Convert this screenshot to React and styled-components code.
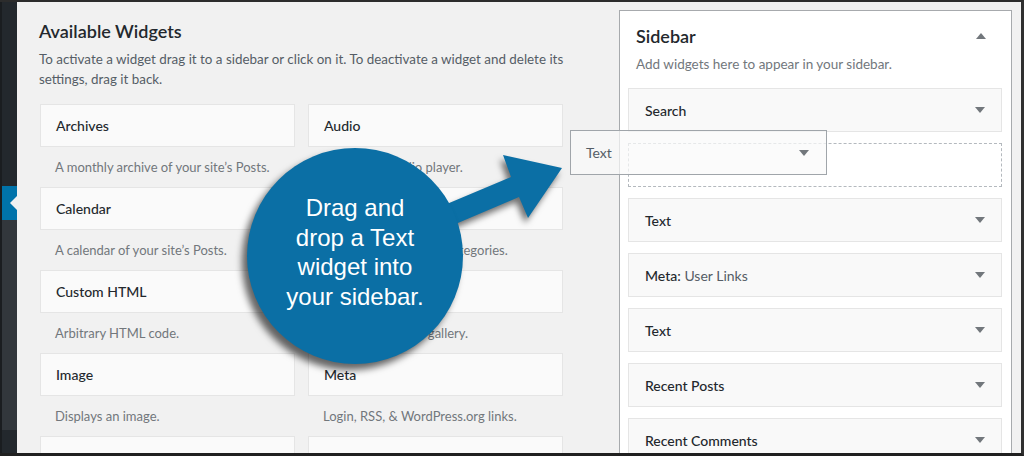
import React from "react";
import styled, { createGlobalStyle } from "styled-components";

const GlobalStyle = createGlobalStyle`
  html, body {
    margin: 0;
    padding: 0;
    overflow: hidden;
    background: #f1f1f1;
  }
  * { box-sizing: border-box; }
`;

const Frame = styled.div`
  width: 1024px;
  height: 456px;
  overflow: hidden;
  border-top: 2px solid #2c2c2c;
  border-right: 3px solid #2f2f2f;
  border-bottom: 3px solid #202020;
  background: #f1f1f1;
  font-family: Lato, "Noto Sans", sans-serif;
  color: #23282d;
`;

const Canvas = styled.div`
  position: relative;
  display: flex;
  height: 100%;
`;

// admin menu strip on the far left
const AdminMenu = styled.div`
  width: 17px;
  flex: none;
  display: flex;
  flex-direction: column;
  border-left: 2px solid #1a1d20;
  background: #23282d;
`;

const MenuPart = styled.div`
  height: ${(p) => p.h}px;
  flex: none;
  background: ${(p) => p.bg};
  position: relative;
`;

const CurrentMark = styled.div`
  position: absolute;
  right: 0;
  top: 10px;
  width: 0;
  height: 0;
  border-top: 7px solid transparent;
  border-bottom: 7px solid transparent;
  border-right: 7px solid #f1f1f1;
`;

const Main = styled.div`
  flex: 1;
  display: flex;
  padding-right: 9px;
`;

const Available = styled.section`
  width: 602px;
  flex: none;
  padding: 17px 0 0 22px;
`;

const Heading = styled.h2`
  margin: 0;
  font-size: 18px;
  line-height: 24px;
  font-weight: 600;
  color: #23282d;
`;

const Intro = styled.p`
  margin: 6px 0 0;
  width: 528px;
  font-size: 13.4px;
  line-height: 20px;
  color: #555d66;
`;

const WidgetGrid = styled.div`
  display: grid;
  grid-template-columns: 255px 255px;
  column-gap: 13px;
  margin: 15px 0 0 1px;
`;

const Widget = styled.div`
  height: 83px;
`;

const Card = styled.div`
  height: 43px;
  display: flex;
  align-items: center;
  padding: 0 15px;
  background: #fafafa;
  border: 1px solid #e5e5e5;
  font-size: 14px;
  font-weight: 500;
  color: #23282d;
`;

const WidgetDesc = styled.div`
  padding: 11px 0 0 15px;
  font-size: 13px;
  line-height: 18px;
  color: #72777c;
`;

const SidebarPanel = styled.section`
  flex: 1;
  margin-top: 8px;
  background: #fff;
  border: 1px solid #a7aaad;
  border-bottom: none;
  padding: 13px 9px 0 8px;
`;

const PanelHead = styled.div`
  display: flex;
  align-items: center;
  justify-content: space-between;
  padding: 0 16px 0 8px;
`;

const PanelTitle = styled.h3`
  margin: 0;
  font-size: 18px;
  line-height: 24px;
  font-weight: 600;
  color: #23282d;
`;

const Caret = styled.span`
  width: 0;
  height: 0;
  border-left: 5px solid transparent;
  border-right: 5px solid transparent;
  ${(p) =>
    p.up
      ? "border-bottom: 6px solid #72777c;"
      : "border-top: 6px solid #72777c;"}
`;

const PanelDesc = styled.p`
  margin: 7px 0 15px 8px;
  font-size: 13.5px;
  line-height: 18px;
  color: #72777c;
`;

const ItemList = styled.div`
  display: flex;
  flex-direction: column;
  gap: 11px;
`;

const Item = styled.div`
  height: 44px;
  flex: none;
  display: flex;
  align-items: center;
  justify-content: space-between;
  padding: 0 16px;
  background: ${(p) => (p.placeholder ? "transparent" : "#f9f9f9")};
  border: 1px ${(p) => (p.placeholder ? "dashed #b4b9be" : "solid #e5e5e5")};
  font-size: 14px;
  font-weight: 500;
  color: #23282d;
`;

const Subtitle = styled.span`
  font-weight: 400;
  color: #555d66;
`;

const Dragged = styled.div`
  position: absolute;
  left: 570px;
  top: 128px;
  width: 257px;
  height: 45px;
  display: flex;
  align-items: center;
  justify-content: space-between;
  padding: 0 17px 0 15px;
  background: rgba(250, 250, 250, 0.72);
  border: 1px solid #a0a5aa;
  font-size: 14px;
  color: #555d66;
`;

const Arrow = styled.svg`
  position: absolute;
  left: 0;
  top: 0;
  filter: drop-shadow(-3px 5px 3px rgba(0, 0, 0, 0.55));
`;

const Callout = styled.div`
  position: absolute;
  left: 247px;
  top: 146px;
  width: 216px;
  height: 216px;
  border-radius: 50%;
  background: #0b6fa5;
  box-shadow: -5px 6px 7px rgba(0, 0, 0, 0.6);
  display: flex;
  align-items: center;
  justify-content: center;
  padding-bottom: 8px;
  text-align: center;
  font-family: "Liberation Sans", Arial, sans-serif;
  font-size: 24px;
  line-height: 29.5px;
  color: #fff;
`;

const available = [
  ["Archives", "A monthly archive of your site’s Posts."],
  ["Audio", "Displays an audio player."],
  ["Calendar", "A calendar of your site’s Posts."],
  ["Categories", "A list or dropdown of categories."],
  ["Custom HTML", "Arbitrary HTML code."],
  ["Gallery", "Displays an image gallery."],
  ["Image", "Displays an image."],
  ["Meta", "Login, RSS, & WordPress.org links."],
  ["Navigation Menu", "Add a navigation menu to your sidebar."],
  ["Pages", "A list of your site’s Pages."],
];

const sidebarItems = [
  { title: "Search" },
  { placeholder: true },
  { title: "Text" },
  { title: "Meta:", sub: "User Links" },
  { title: "Text" },
  { title: "Recent Posts" },
  { title: "Recent Comments" },
];

export default function App() {
  return (
    <>
      <GlobalStyle />
      <Frame>
        <Canvas>
          <AdminMenu>
            <MenuPart h={184} bg="#23282d" />
            <MenuPart h={34} bg="#0073aa">
              <CurrentMark />
            </MenuPart>
            <MenuPart h={210} bg="#32373c" />
          </AdminMenu>

          <Main>
            <Available>
              <Heading>Available Widgets</Heading>
              <Intro>
                To activate a widget drag it to a sidebar or click on it. To
                deactivate a widget and delete its settings, drag it back.
              </Intro>
              <WidgetGrid>
                {available.map(([name, desc]) => (
                  <Widget key={name}>
                    <Card>{name}</Card>
                    <WidgetDesc>{desc}</WidgetDesc>
                  </Widget>
                ))}
              </WidgetGrid>
            </Available>

            <SidebarPanel>
              <PanelHead>
                <PanelTitle>Sidebar</PanelTitle>
                <Caret up />
              </PanelHead>
              <PanelDesc>Add widgets here to appear in your sidebar.</PanelDesc>
              <ItemList>
                {sidebarItems.map((it, i) =>
                  it.placeholder ? (
                    <Item key={i} placeholder />
                  ) : (
                    <Item key={i}>
                      <span>
                        {it.title}
                        {it.sub && <Subtitle> {it.sub}</Subtitle>}
                      </span>
                      <Caret />
                    </Item>
                  )
                )}
              </ItemList>
            </SidebarPanel>
          </Main>

          <Dragged>
            <span>Text</span>
            <Caret />
          </Dragged>

          <Arrow width="1021" height="451" viewBox="0 2 1021 451">
            <polygon
              points="423,214 511,177 503,155 562,168 528,218 519,197 432,234"
              fill="#0b6fa5"
            />
          </Arrow>

          <Callout>
            Drag and
            <br />
            drop a Text
            <br />
            widget into
            <br />
            your sidebar.
          </Callout>
        </Canvas>
      </Frame>
    </>
  );
}
